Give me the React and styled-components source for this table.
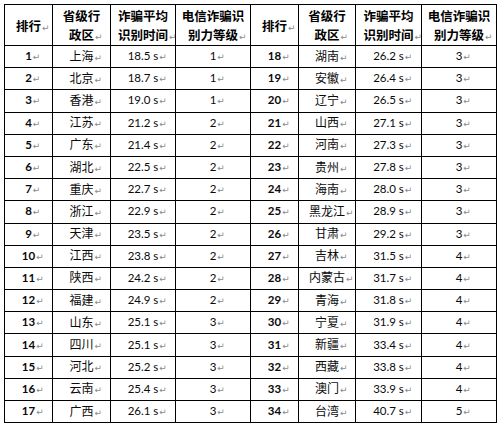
import React from "react";
import styled, { createGlobalStyle } from "styled-components";

const Global = createGlobalStyle`
  html, body { margin: 0; padding: 0; background: #fff; }
  body { font-family: "Noto Sans CJK SC", sans-serif; }
`;

const Page = styled.div`
  padding: 4px 0 0 4px;
`;

const Grid = styled.div`
  display: grid;
  grid-template-columns: 48px 58px 65px 75px 48px 57px 66px 75px;
  grid-template-rows: 41px repeat(17, 22.2px);
  width: max-content;
  border-top: 1px solid #000;
  border-left: 1px solid #000;
`;

const Cell = styled.div`
  box-sizing: border-box;
  border-right: 1px solid #000;
  border-bottom: 1px solid #000;
  display: flex;
  flex-direction: column;
  align-items: center;
  justify-content: center;
  color: #000;
  white-space: nowrap;
  overflow: visible;
`;

const HeadCell = styled(Cell)`
  padding-top: 3px;
  font-family: "Noto Sans CJK SC", sans-serif;
  font-weight: 700;
  font-size: 12.5px;
  line-height: 19px;
`;

const Line = styled.span`
  display: block;
`;

const Text = styled.span`
  font-family: ${(p) =>
    p.$cjk ? '"Noto Sans CJK SC", sans-serif' : 'Lato, "Liberation Sans", sans-serif'};
  font-size: ${(p) => (p.$cjk ? "12px" : "11.5px")};
  font-weight: ${(p) => (p.$bold ? 700 : 400)};
  line-height: 14px;
  color: #0a0a0a;
`;

const MarkBox = styled.span`
  display: inline-block;
  width: 0;
  overflow: visible;
  vertical-align: baseline;
`;

const MarkGlyph = styled.span`
  font-family: "DejaVu Sans", sans-serif;
  font-size: 9px;
  font-weight: 400;
  color: #8a8a8a;
  margin-left: 1px;
`;

const Mark = () => (
  <MarkBox>
    <MarkGlyph>↵</MarkGlyph>
  </MarkBox>
);

const left = [
  [1, "上海", "18.5", 1],
  [2, "北京", "18.7", 1],
  [3, "香港", "19.0", 1],
  [4, "江苏", "21.2", 2],
  [5, "广东", "21.4", 2],
  [6, "湖北", "22.5", 2],
  [7, "重庆", "22.7", 2],
  [8, "浙江", "22.9", 2],
  [9, "天津", "23.5", 2],
  [10, "江西", "23.8", 2],
  [11, "陕西", "24.2", 2],
  [12, "福建", "24.9", 2],
  [13, "山东", "25.1", 3],
  [14, "四川", "25.1", 3],
  [15, "河北", "25.2", 3],
  [16, "云南", "25.4", 3],
  [17, "广西", "26.1", 3],
];

const right = [
  [18, "湖南", "26.2", 3],
  [19, "安徽", "26.4", 3],
  [20, "辽宁", "26.5", 3],
  [21, "山西", "27.1", 3],
  [22, "河南", "27.3", 3],
  [23, "贵州", "27.8", 3],
  [24, "海南", "28.0", 3],
  [25, "黑龙江", "28.9", 3],
  [26, "甘肃", "29.2", 3],
  [27, "吉林", "31.5", 4],
  [28, "内蒙古", "31.7", 4],
  [29, "青海", "31.8", 4],
  [30, "宁夏", "31.9", 4],
  [31, "新疆", "33.4", 4],
  [32, "西藏", "33.8", 4],
  [33, "澳门", "33.9", 4],
  [34, "台湾", "40.7", 5],
];

const headers = [
  ["排行"],
  ["省级行", "政区"],
  ["诈骗平均", "识别时间"],
  ["电信诈骗识", "别力等级"],
];

const Header = ({ lines }) => (
  <HeadCell>
    {lines.map((l, i) => (
      <Line key={i}>
        {l}
        {i === lines.length - 1 && <Mark />}
      </Line>
    ))}
  </HeadCell>
);

const Group = ({ row }) => (
  <>
    <Cell>
      <Text $bold>
        {row[0]}
        <Mark />
      </Text>
    </Cell>
    <Cell>
      <Text $cjk>
        {row[1]}
        <Mark />
      </Text>
    </Cell>
    <Cell>
      <Text>
        {row[2]} s
        <Mark />
      </Text>
    </Cell>
    <Cell>
      <Text>
        {row[3]}
        <Mark />
      </Text>
    </Cell>
  </>
);

export default function App() {
  return (
    <Page>
      <Global />
      <Grid>
        {[...headers, ...headers].map((h, i) => (
          <Header key={i} lines={h} />
        ))}
        {left.map((r, i) => (
          <React.Fragment key={i}>
            <Group row={r} />
            <Group row={right[i]} />
          </React.Fragment>
        ))}
      </Grid>
    </Page>
  );
}
